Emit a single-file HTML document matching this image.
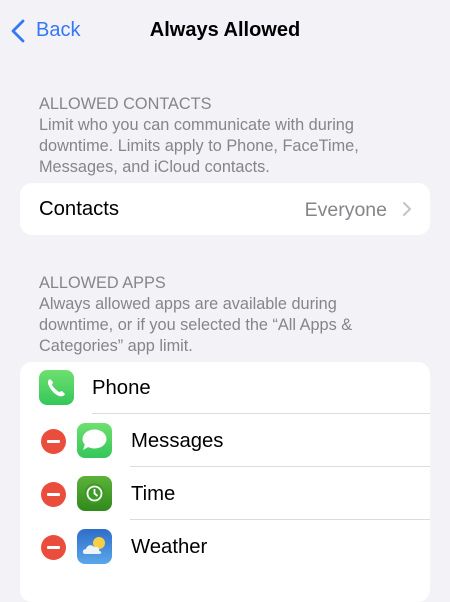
<!DOCTYPE html><html><head><style>
body{margin:0;width:450px;height:583px;background:#f2f2f7;font-family:"Liberation Sans",sans-serif;position:relative;overflow:hidden}
.a{position:absolute;white-space:nowrap}
.h{color:#85858a;font-size:16.3px;left:39px;line-height:21px}
.card{position:absolute;left:20px;width:410px;background:#fff;border-radius:12px}
.t{font-size:20.3px;color:#000}
.min{position:absolute;left:41px;width:25px;height:25px;border-radius:50%;background:#eb4d3d}
.min:after{content:"";position:absolute;left:6px;top:11px;width:13px;height:3px;background:#fff;border-radius:1px}
.ic{position:absolute;width:35px;height:35px;border-radius:8px}
.sep{position:absolute;right:0;height:1px;background:#dcdce0}
</style></head><body>
<svg class="a" style="left:10px;top:19px" width="16" height="24"><path d="M13 2 L3 12 L13 22" fill="none" stroke="#3478f6" stroke-width="2.8" stroke-linecap="round" stroke-linejoin="round"/></svg>
<div class="a" style="left:36px;top:19px;font-size:20px;color:#3478f6">Back</div>
<div class="a" style="left:0;width:450px;text-align:center;top:19px;font-size:20px;font-weight:bold">Always Allowed</div>
<div class="a h" style="top:94px">ALLOWED CONTACTS<br>Limit who you can communicate with during<br>downtime. Limits apply to Phone, FaceTime,<br>Messages, and iCloud contacts.</div>
<div class="card" style="top:183px;height:52px">
<div class="a t" style="left:19px;top:15px">Contacts</div>
<div class="a" style="right:43px;top:16px;font-size:19.5px;color:#85858a">Everyone</div>
<svg class="a" style="right:18px;top:18px" width="10" height="16"><path d="M2 2 L8 8 L2 14" fill="none" stroke="#c4c4c7" stroke-width="2" stroke-linecap="round" stroke-linejoin="round"/></svg>
</div>
<div class="a h" style="top:273px">ALLOWED APPS<br>Always allowed apps are available during<br>downtime, or if you selected the “All Apps &amp;<br>Categories” app limit.</div>
<div class="card" style="top:362px;height:240px">
<div class="ic" style="left:19px;top:8px;background:linear-gradient(#6ee06f,#34c759)"><svg width="35" height="35"><path d="M11 9 C9 10 8 12 10 16 C12 20 15 24 20 26 C23 27 25 26 26 24 L23 21 L20 22 C17 20 15 18 13 15 L14 12 Z" fill="#fff"/></svg></div>
<div class="a t" style="left:72px;top:15px">Phone</div>
<div class="sep" style="left:72px;top:51px"></div>
<div class="min" style="left:21px;top:67px"></div>
<div class="ic" style="left:57px;top:61px;background:linear-gradient(#6ee06f,#34c759)"><svg width="35" height="35"><ellipse cx="17.5" cy="16" rx="12" ry="9.5" fill="#fff"/><path d="M8 21 L6 27 L13 23Z" fill="#fff"/></svg></div>
<div class="a t" style="left:111px;top:68px">Messages</div>
<div class="sep" style="left:110px;top:104px"></div>
<div class="min" style="left:21px;top:120px"></div>
<div class="ic" style="left:57px;top:114px;background:linear-gradient(#5cb33a,#2f8a1c)"><svg width="35" height="35"><circle cx="17.5" cy="17.5" r="10" fill="#3c9a25"/><circle cx="17.5" cy="17.5" r="7" fill="none" stroke="#fff" stroke-width="1.8"/><path d="M17.5 13 V17.5 L20.5 20" fill="none" stroke="#fff" stroke-width="1.8"/></svg></div>
<div class="a t" style="left:111px;top:121px">Time</div>
<div class="sep" style="left:110px;top:157px"></div>
<div class="min" style="left:21px;top:173px"></div>
<div class="ic" style="left:57px;top:167px;background:linear-gradient(#2f6dc9,#5aa7ea)"><svg width="35" height="35"><circle cx="22" cy="14" r="6" fill="#f7cf45"/><path d="M8 25 C5 25 5 20 9 20 C10 16 15 15 17 18 C20 17 23 19 22 22 C25 22 25 25 22 25 Z" fill="#eef3fa"/></svg></div>
<div class="a t" style="left:111px;top:174px">Weather</div>
</div>
</body></html>
